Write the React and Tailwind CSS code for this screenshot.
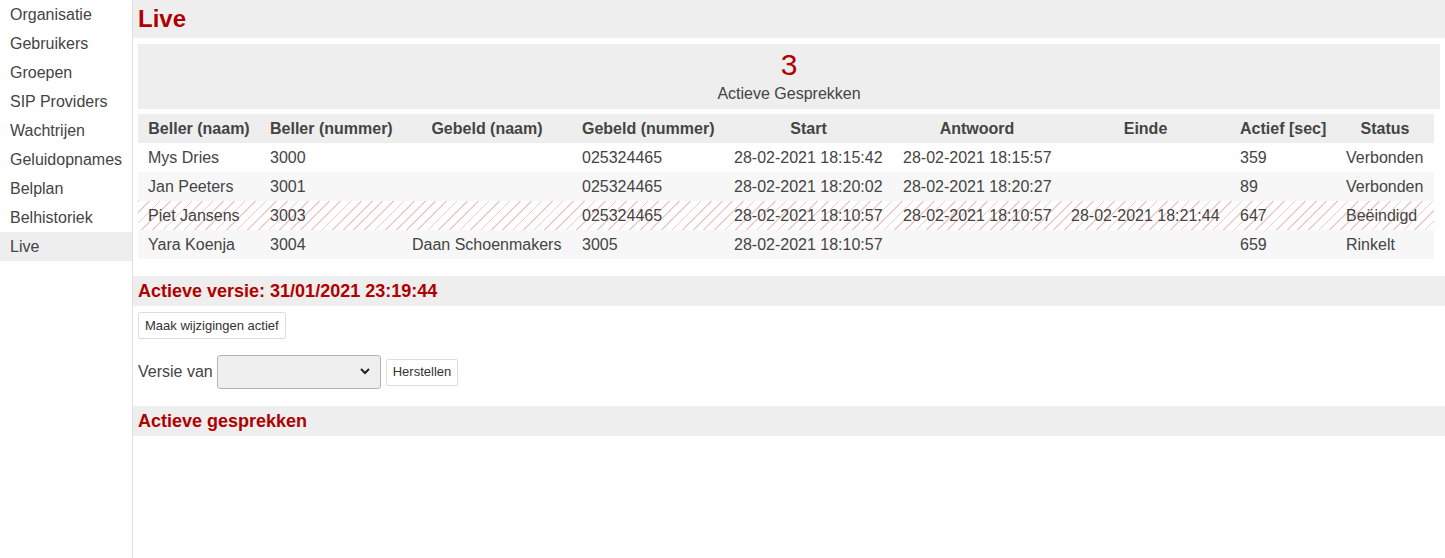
import React from "react";

const menu = [
  "Organisatie",
  "Gebruikers",
  "Groepen",
  "SIP Providers",
  "Wachtrijen",
  "Geluidopnames",
  "Belplan",
  "Belhistoriek",
  "Live",
];

// kolommen met vaste breedtes zodat de tabel overeenkomt
const columns = [
  { label: "Beller (naam)", w: "w-[122px]" },
  { label: "Beller (nummer)", w: "w-[142px]" },
  { label: "Gebeld (naam)", w: "w-[170px]" },
  { label: "Gebeld (nummer)", w: "w-[152px]" },
  { label: "Start", w: "w-[169px]" },
  { label: "Antwoord", w: "w-[168px]" },
  { label: "Einde", w: "w-[169px]" },
  { label: "Actief [sec]", w: "w-[106px]" },
  { label: "Status", w: "w-[98px]" },
];

const calls = [
  ["Mys Dries", "3000", "", "025324465", "28-02-2021 18:15:42", "28-02-2021 18:15:57", "", "359", "Verbonden"],
  ["Jan Peeters", "3001", "", "025324465", "28-02-2021 18:20:02", "28-02-2021 18:20:27", "", "89", "Verbonden"],
  ["Piet Jansens", "3003", "", "025324465", "28-02-2021 18:10:57", "28-02-2021 18:10:57", "28-02-2021 18:21:44", "647", "Beëindigd"],
  ["Yara Koenja", "3004", "Daan Schoenmakers", "3005", "28-02-2021 18:10:57", "", "", "659", "Rinkelt"],
];

function rowClass(row, idx) {
  if (row[8] === "Beëindigd") {
    return "bg-white bg-[image:repeating-linear-gradient(135deg,#f1caca_0px,#f1caca_1.2px,transparent_1.2px,transparent_7.5px)]";
  }
  return idx % 2 === 1 ? "bg-[#f7f7f7]" : "bg-white";
}

export default function App() {
  return (
    <div className="flex min-h-[558px] font-['Liberation_Sans',Arial,sans-serif] text-[16px] text-[#444]">
      <nav className="w-[133px] shrink-0 border-r border-[#e0e0e0]">
        {menu.map((item) => (
          <div
            key={item}
            className={`h-[29px] leading-[29px] pl-[10px] ${item === "Live" ? "bg-[#eeeeee]" : ""}`}
          >
            {item}
          </div>
        ))}
      </nav>

      <main className="flex-1">
        <h1 className="h-[38px] bg-[#eeeeee] pl-[5px] text-[24px] font-bold leading-[38px] text-[#b00000]">
          Live
        </h1>

        <div className="px-[5px]">
          <div className="mt-[6px] flex h-[65px] flex-col items-center justify-center bg-[#eeeeee]">
            <div className="text-[30px] leading-[32px] text-[#b00000]">3</div>
            <div className="mt-[3px] leading-[20px]">Actieve Gesprekken</div>
          </div>

          <table className="mt-[5px] w-[1296px] table-fixed border-collapse">
            <thead>
              <tr className="h-[29px] bg-[#eeeeee]">
                {columns.map((c) => (
                  <th key={c.label} className={`${c.w} px-[10px] text-center font-bold whitespace-nowrap`}>
                    {c.label}
                  </th>
                ))}
              </tr>
            </thead>
            <tbody>
              {calls.map((row, idx) => (
                <tr key={idx} className={`h-[29px] ${rowClass(row, idx)}`}>
                  {row.map((cell, i) => (
                    <td key={i} className="px-[10px] whitespace-nowrap">
                      {cell}
                    </td>
                  ))}
                </tr>
              ))}
            </tbody>
          </table>
        </div>

        <h2 className="mt-[17px] h-[30px] bg-[#eeeeee] pl-[5px] text-[18px] font-bold leading-[30px] text-[#b00000]">
          Actieve versie: 31/01/2021 23:19:44
        </h2>

        <div className="px-[5px]">
          <button className="mt-[6px] h-[27px] rounded-[2px] border border-[#dddddd] bg-white px-[6px] text-[13px] text-[#333]">
            Maak wijzigingen actief
          </button>

          <div className="mt-[16px] flex items-center">
            <span className="mr-[4px]">Versie van</span>
            <div className="relative">
              <select className="h-[34px] w-[164px] appearance-none rounded-[3px] border border-[#b4b4b4] bg-[#efefef] px-2">
                <option></option>
              </select>
              <svg
                className="pointer-events-none absolute right-[11px] top-[13px]"
                width="10"
                height="7"
                viewBox="0 0 10 7"
              >
                <path d="M1 1l4 4 4-4" fill="none" stroke="#222" strokeWidth="2" />
              </svg>
            </div>
            <button className="ml-[5px] h-[27px] rounded-[2px] border border-[#dddddd] bg-white px-[6px] text-[13px] text-[#333]">
              Herstellen
            </button>
          </div>
        </div>

        <h2 className="mt-[17px] h-[30px] bg-[#eeeeee] pl-[5px] text-[18px] font-bold leading-[30px] text-[#b00000]">
          Actieve gesprekken
        </h2>
      </main>
    </div>
  );
}
